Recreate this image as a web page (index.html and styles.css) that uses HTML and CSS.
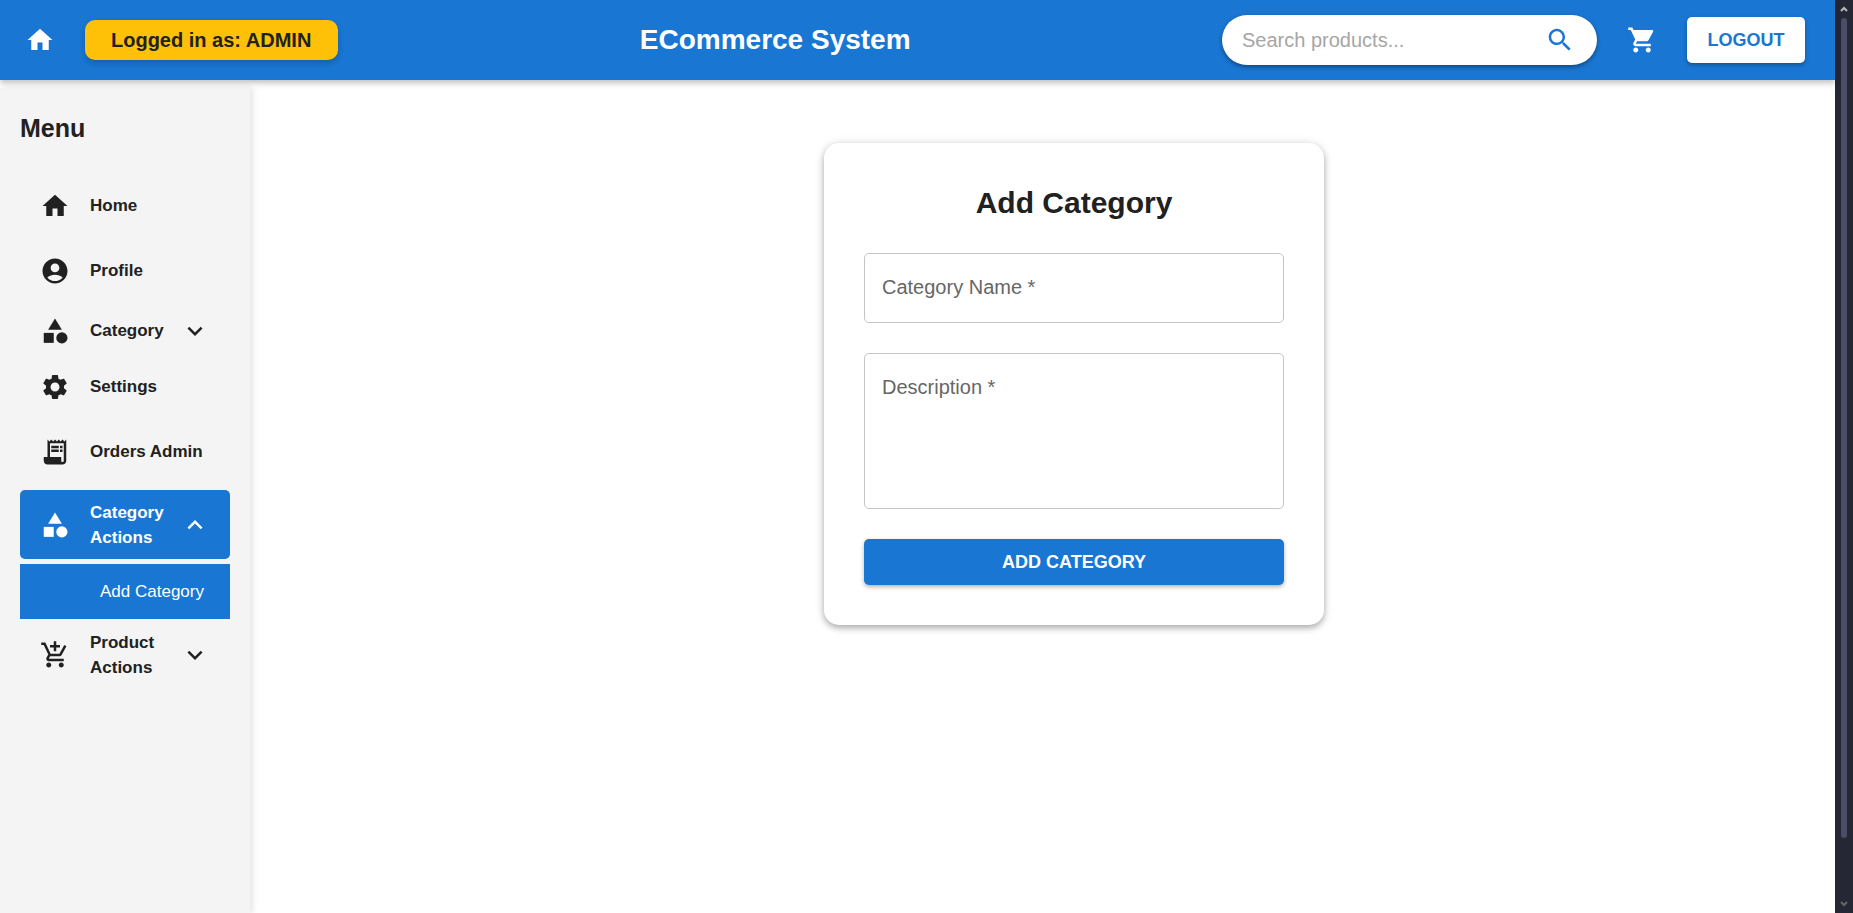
FILE: index.html
```html
<!DOCTYPE html>
<html lang="en">
<head>
<meta charset="utf-8">
<title>ECommerce System</title>
<link rel="stylesheet" href="styles.css">
</head>
<body>
<svg class="sprite" aria-hidden="true">
  <symbol id="home" viewBox="0 0 24 24"><path d="M10 20v-6h4v6h5v-8h3L12 3 2 12h3v8z"/></symbol>
  <symbol id="account" viewBox="0 0 24 24"><path d="M12 2C6.48 2 2 6.48 2 12s4.48 10 10 10 10-4.48 10-10S17.52 2 12 2zm0 4c1.93 0 3.500 1.570 3.500 3.500S13.930 13 12 13s-3.500-1.570-3.500-3.500S10.070 6 12 6zm0 14c-2.030 0-4.430-.82-6.140-2.880C7.550 15.800 9.680 15 12 15s4.450.8 6.140 2.120C16.430 19.180 14.030 20 12 20z"/></symbol>
  <symbol id="category" viewBox="0 0 24 24"><path d="m12 2-5.500 9h11z"/><circle cx="17.500" cy="17.500" r="4.500"/><path d="M3 13.500h8v8H3z"/></symbol>
  <symbol id="settings" viewBox="0 0 24 24"><path d="M19.140 12.940c.04-.3.06-.61.06-.94 0-.32-.02-.64-.07-.94l2.030-1.580c.18-.14.23-.41.12-.61l-1.920-3.320c-.12-.22-.37-.29-.59-.22l-2.390.96c-.5-.38-1.030-.7-1.620-.94l-.36-2.540c-.04-.24-.24-.41-.48-.41h-3.840c-.24 0-.43.17-.47.41l-.36 2.540c-.59.24-1.130.57-1.620.94l-2.390-.96c-.22-.08-.47 0-.59.22L2.740 8.870c-.12.21-.08.47.12.61l2.030 1.580c-.05.3-.09.63-.09.94s.02.64.07.94l-2.030 1.580c-.18.14-.23.41-.12.61l1.920 3.320c.12.22.37.29.59.22l2.390-.96c.5.38 1.030.7 1.620.94l.36 2.540c.05.24.24.41.48.41h3.840c.24 0 .44-.17.47-.41l.36-2.540c.59-.24 1.130-.56 1.620-.94l2.390.96c.22.08.47 0 .59-.22l1.920-3.320c.12-.22.07-.47-.12-.61zM12 15.600c-1.980 0-3.600-1.620-3.600-3.600s1.620-3.600 3.600-3.600 3.600 1.620 3.600 3.600-1.620 3.600-3.600 3.600"/></symbol>
  <symbol id="receipt" viewBox="0 0 24 24"><path d="M19.500 3.500 18 2l-1.500 1.500L15 2l-1.500 1.500L12 2l-1.500 1.500L9 2 7.500 3.500 6 2v14H3v3c0 1.660 1.340 3 3 3h12c1.660 0 3-1.340 3-3V2zM19 19c0 .55-.45 1-1 1s-1-.45-1-1v-3H8V5h11z"/><path d="M9 7h6v2H9zm7 0h2v2h-2zm-7 3h6v2H9zm7 0h2v2h-2z"/></symbol>
  <symbol id="add-cart" viewBox="0 0 24 24"><path d="M11 9h2V6h3V4h-3V1h-2v3H8v2h3zm-4 9c-1.100 0-1.990.9-1.990 2S5.900 22 7 22s2-.9 2-2-.9-2-2-2m10 0c-1.100 0-1.990.9-1.990 2s.89 2 1.990 2 2-.9 2-2-.9-2-2-2m-9.830-3.250.03-.12.9-1.630h7.450c.75 0 1.410-.41 1.750-1.030l3.860-7.010L19.420 4h-.01l-1.100 2-2.760 5H8.530l-.13-.27L6.160 6l-.95-2-.94-2H1v2h2l3.600 7.590-1.350 2.450c-.16.28-.25.61-.25.96 0 1.100.9 2 2 2h12v-2H7.420c-.13 0-.25-.11-.25-.25"/></symbol>
  <symbol id="cart" viewBox="0 0 24 24"><path d="M7 18c-1.100 0-1.990.9-1.990 2S5.900 22 7 22s2-.9 2-2-.9-2-2-2M1 2v2h2l3.600 7.590-1.350 2.450c-.16.28-.25.61-.25.96 0 1.100.9 2 2 2h12v-2H7.420c-.14 0-.25-.11-.25-.25l.03-.12.9-1.630h7.450c.75 0 1.410-.41 1.750-1.030l3.580-6.490c.08-.14.12-.31.12-.48 0-.55-.45-1-1-1H5.210l-.94-2zm16 16c-1.100 0-1.990.9-1.990 2s.89 2 1.990 2 2-.9 2-2-.9-2-2-2"/></symbol>
  <symbol id="search" viewBox="0 0 24 24"><path d="M15.500 14h-.79l-.28-.27C15.410 12.590 16 11.110 16 9.500 16 5.910 13.090 3 9.500 3S3 5.910 3 9.500 5.910 16 9.500 16c1.610 0 3.090-.59 4.230-1.570l.27.28v.79l5 4.990L20.490 19zm-6 0C7.010 14 5 11.990 5 9.500S7.010 5 9.500 5 14 7.010 14 9.500 11.990 14 9.500 14"/></symbol>
  <symbol id="more" viewBox="0 0 24 24"><path d="M16.590 8.590 12 13.170 7.410 8.590 6 10l6 6 6-6z"/></symbol>
  <symbol id="less" viewBox="0 0 24 24"><path d="m12 8-6 6 1.410 1.410L12 10.830l4.590 4.580L18 14z"/></symbol>
</svg>
<div class="window">
  <div class="app">
    <header class="topbar">
      <a class="icon-link" href="#" aria-label="Home"><svg class="icon"><use href="#home"/></svg></a>
      <span class="role">Logged in as: ADMIN</span>
      <h1 class="brand">ECommerce System</h1>
      <form class="search">
        <input class="search-input" type="search" placeholder="Search products..." aria-label="Search products">
        <button class="search-button" type="button" aria-label="Search"><svg class="icon"><use href="#search"/></svg></button>
      </form>
      <a class="icon-link cart" href="#" aria-label="Cart"><svg class="icon"><use href="#cart"/></svg></a>
      <button class="button logout" type="button">LOGOUT</button>
    </header>
    <div class="body">
      <nav class="sidebar" aria-label="Menu">
        <h2 class="menu-title">Menu</h2>
        <ul class="menu">
          <li class="entry"><a class="item" href="#"><svg class="icon"><use href="#home"/></svg><span class="label">Home</span></a></li>
          <li class="entry"><a class="item" href="#"><svg class="icon"><use href="#account"/></svg><span class="label">Profile</span></a></li>
          <li class="group"><button class="item" type="button" aria-expanded="false"><svg class="icon"><use href="#category"/></svg><span class="label">Category</span><svg class="icon"><use href="#more"/></svg></button></li>
          <li class="entry after-group"><a class="item" href="#"><svg class="icon"><use href="#settings"/></svg><span class="label">Settings</span></a></li>
          <li class="entry"><a class="item" href="#"><svg class="icon"><use href="#receipt"/></svg><span class="label">Orders Admin</span></a></li>
          <li class="group-open">
            <button class="item wrapped active" type="button" aria-expanded="true"><svg class="icon"><use href="#category"/></svg><span class="label">Category Actions</span><svg class="icon"><use href="#less"/></svg></button>
            <a class="subitem" href="#">Add Category</a>
          </li>
          <li class="group"><button class="item wrapped" type="button" aria-expanded="false"><svg class="icon"><use href="#add-cart"/></svg><span class="label">Product Actions</span><svg class="icon"><use href="#more"/></svg></button></li>
        </ul>
      </nav>
      <main class="content">
        <form class="card">
          <h2 class="card-title">Add Category</h2>
          <div class="field">
            <label class="field-label" for="name">Category Name *</label>
            <input class="control" id="name" type="text">
          </div>
          <div class="field">
            <label class="field-label" for="description">Description *</label>
            <textarea class="control area" id="description" rows="4"></textarea>
          </div>
          <button class="button submit" type="button">ADD CATEGORY</button>
        </form>
      </main>
    </div>
  </div>
  <div class="scrollbar" aria-hidden="true">
    <svg class="arrow" viewBox="0 0 8 8"><path d="M1 6l3-3 3 3"/></svg>
    <div class="track"><div class="thumb"></div></div>
    <svg class="arrow dim" viewBox="0 0 8 8"><path d="M1 2l3 3 3-3"/></svg>
  </div>
</div>
</body>
</html>
```

FILE: styles.css
```css
* { box-sizing: border-box; }

body {
  margin: 0;
  font-family: "Liberation Sans", Arial, sans-serif;
  font-size: 20px;
  color: #212121;
  background: #fff;
}

h1, h2, ul { margin: 0; padding: 0; }
ul { list-style: none; }
a { color: inherit; text-decoration: none; }
button, input, textarea { font: inherit; color: inherit; border: 0; background: none; padding: 0; }
button { cursor: pointer; }

.sprite { display: none; }
.icon { display: block; flex: none; width: 30px; height: 30px; fill: currentColor; }

.window { display: flex; height: 100vh; overflow: hidden; }
.app { flex: 1; min-width: 0; display: flex; flex-direction: column; }

.topbar {
  position: relative;
  z-index: 1;
  display: flex;
  align-items: center;
  height: 80px;
  padding: 0 30px 0 25px;
  color: #fff;
  background: #1976d2;
  box-shadow: 0 3px 6px rgba(0, 0, 0, 0.25);
}
.role {
  margin-left: 30px;
  padding: 0 27px 0 26px;
  line-height: 40px;
  font-weight: 700;
  color: #212121;
  background: #ffc107;
  border-radius: 10px;
  box-shadow: 0 3px 6px rgba(0, 0, 0, 0.2);
}
.brand { flex: 1; padding-right: 10px; font-size: 28px; line-height: 40px; text-align: center; }
.search {
  display: flex;
  align-items: center;
  width: 375px;
  height: 50px;
  padding: 0 22px 0 20px;
  background: #fff;
  border-radius: 25px;
  box-shadow: 0 2px 4px rgba(0, 0, 0, 0.4);
}
.search-input { flex: 1; min-width: 0; height: 30px; outline: 0; appearance: none; color: #212121; }
.search-input::placeholder { color: #a6a6a6; opacity: 1; }
.search-button { color: #1976d2; }
.cart { margin: 0 30px; }

.button {
  height: 46px;
  font-size: 18px;
  font-weight: 700;
  border-radius: 5px;
  box-shadow: 0 2px 4px rgba(0, 0, 0, 0.3);
}
.logout { min-width: 118px; padding: 0 20px; color: #1976d2; background: #fff; }

.body { flex: 1; min-height: 0; display: flex; padding-top: 8px; }
.sidebar {
  flex: none;
  width: 250px;
  padding: 12px 20px 20px;
  background: #f4f4f4;
  box-shadow: 3px 0 6px rgba(0, 0, 0, 0.1);
}
.menu-title { margin-bottom: 17px; font-size: 25px; line-height: 56px; }
.entry { padding: 5px 0; }
.entry.after-group { padding-top: 0; }
.group { padding-bottom: 1px; }
.group-open { padding: 6px 0 1px; }
.item {
  display: flex;
  align-items: center;
  width: 100%;
  padding: 0 20px;
  min-height: 55px;
  font-size: 17px;
  line-height: 25px;
  font-weight: 700;
  text-align: left;
  border-radius: 5px;
}
.item .label { flex: 1; margin-left: 20px; }
.item.wrapped { min-height: 69px; }
.item.active { color: #fff; background: #1976d2; }
.subitem {
  display: block;
  margin-top: 5px;
  padding-left: 80px;
  font-size: 17px;
  line-height: 55px;
  color: #fff;
  background: #1976d2;
}

.content { flex: 1; min-width: 0; padding: 55px 20px 20px 83px; }
.card {
  display: flex;
  flex-direction: column;
  gap: 30px;
  max-width: 500px;
  margin: 0 auto;
  padding: 40px;
  background: #fff;
  border-radius: 15px;
  box-shadow: 0 3px 6px rgba(0, 0, 0, 0.28), 0 1px 12px rgba(0, 0, 0, 0.1);
}
.card-title { font-size: 30px; line-height: 40px; text-align: center; }
.field { position: relative; }
.field-label { position: absolute; top: 19px; left: 18px; line-height: 30px; color: #666; }
.control {
  display: block;
  width: 100%;
  height: 70px;
  padding: 20px 18px;
  border: 1px solid #c4c4c4;
  border-radius: 5px;
}
.area { height: 156px; resize: none; }
.submit { color: #fff; background: #1976d2; }

.scrollbar {
  flex: none;
  display: flex;
  flex-direction: column;
  align-items: center;
  gap: 5px;
  width: 18px;
  padding: 5px 0;
  background: #252834;
}
.arrow { width: 8px; height: 8px; fill: none; stroke: #b8b8b8; stroke-width: 2; }
.arrow.dim { stroke: #666; }
.track { flex: 1; width: 6px; }
.thumb { height: calc(100% - 57px); border-radius: 3px; background: #4b4d67; }
```
